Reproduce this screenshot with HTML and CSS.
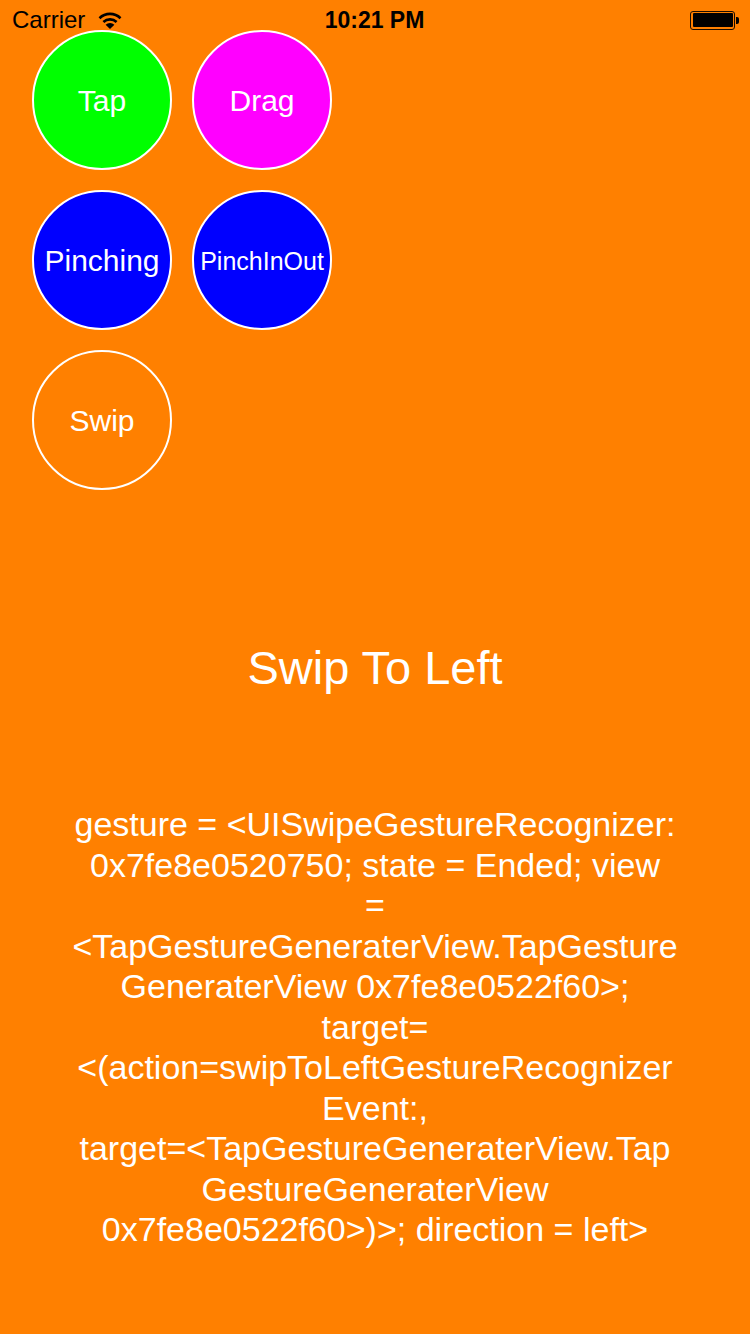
FILE: index.html
```html
<!DOCTYPE html>
<html>
<head>
<meta charset="utf-8">
<link rel="stylesheet" href="styles.css">
</head>
<body>
<div class="statusbar">
  <div class="sb-left">
    <span class="carrier">Carrier</span>
    <svg class="wifi" width="24" height="17" viewBox="0 0 24 17">
      <path d="M1.5 6.2 A15 15 0 0 1 22.5 6.2" fill="none" stroke="#000" stroke-width="2.6"/>
      <path d="M5.4 10 A9.6 9.6 0 0 1 18.6 10" fill="none" stroke="#000" stroke-width="2.6"/>
      <path d="M12 17 L7.6 12.8 A6.2 6.2 0 0 1 16.4 12.8 Z" fill="#000"/>
    </svg>
  </div>
  <div class="sb-time">10:21 PM</div>
  <div class="sb-right">
    <div class="battery"><div class="battery-fill"></div></div>
    <div class="battery-nib"></div>
  </div>
</div>

<main class="screen">
  <div class="buttons">
    <div class="circle green">Tap</div>
    <div class="circle magenta">Drag</div>
    <div class="circle blue">Pinching</div>
    <div class="circle blue small">PinchInOut</div>
    <div class="circle clear">Swip</div>
  </div>

  <h1 class="title">Swip To Left</h1>

  <p class="log">gesture = &lt;UISwipeGestureRecognizer:<br>0x7fe8e0520750; state = Ended; view<br>=<br>&lt;TapGestureGeneraterView.TapGesture<br>GeneraterView 0x7fe8e0522f60&gt;;<br>target=<br>&lt;(action=swipToLeftGestureRecognizer<br>Event:,<br>target=&lt;TapGestureGeneraterView.Tap<br>GestureGeneraterView<br>0x7fe8e0522f60&gt;)&gt;; direction = left&gt;</p>
</main>
</body>
</html>
```

FILE: styles.css
```css
html, body {
  margin: 0;
  padding: 0;
}
body {
  width: 750px;
  height: 1334px;
  background: #ff8000;
  font-family: "Liberation Sans", Arial, sans-serif;
  color: #fff;
  position: relative;
  overflow: hidden;
}
.statusbar {
  position: absolute;
  top: 0;
  left: 0;
  right: 0;
  height: 40px;
  display: flex;
  align-items: center;
  justify-content: space-between;
  padding: 0 11px 0 12px;
  color: #000;
  z-index: 2;
}
.sb-left {
  display: flex;
  align-items: center;
  gap: 13px;
  width: 200px;
}
.carrier {
  font-size: 24px;
  line-height: 40px;
}
.wifi {
  display: block;
  margin-top: 1px;
}
.sb-time {
  font-size: 23px;
  font-weight: bold;
  line-height: 40px;
  margin-left: -2px;
}
.sb-right {
  width: 200px;
  display: flex;
  justify-content: flex-end;
  align-items: center;
}
.battery {
  width: 45px;
  height: 19px;
  box-sizing: border-box;
  border: 1.5px solid #1a0d00;
  border-radius: 3px;
  padding: 1.5px;
}
.battery-fill {
  width: 100%;
  height: 100%;
  background: #000;
  border-radius: 1px;
}
.battery-nib {
  width: 3px;
  height: 7px;
  background: #000;
  border-radius: 0 2px 2px 0;
  margin-left: 1px;
}
.screen {
  padding-top: 30px;
}
.buttons {
  display: grid;
  grid-template-columns: 140px 140px;
  gap: 20px;
  padding-left: 32px;
}
.circle {
  width: 140px;
  height: 140px;
  box-sizing: border-box;
  border-radius: 50%;
  border: 2px solid #fff;
  display: flex;
  align-items: center;
  justify-content: center;
  font-size: 30px;
  color: #fff;
  white-space: nowrap;
  padding-top: 2px;
}
.circle.small {
  font-size: 25px;
}
.green { background: #00ff00; }
.magenta { background: #ff00ff; }
.blue { background: #0000ff; }
.clear { background: transparent; }
.title {
  margin: 150px 0 0;
  font-size: 47px;
  font-weight: normal;
  line-height: 56px;
  text-align: center;
}
.log {
  margin: 108px auto 0;
  width: 640px;
  font-size: 34px;
  line-height: 40.5px;
  text-align: center;
}
```
